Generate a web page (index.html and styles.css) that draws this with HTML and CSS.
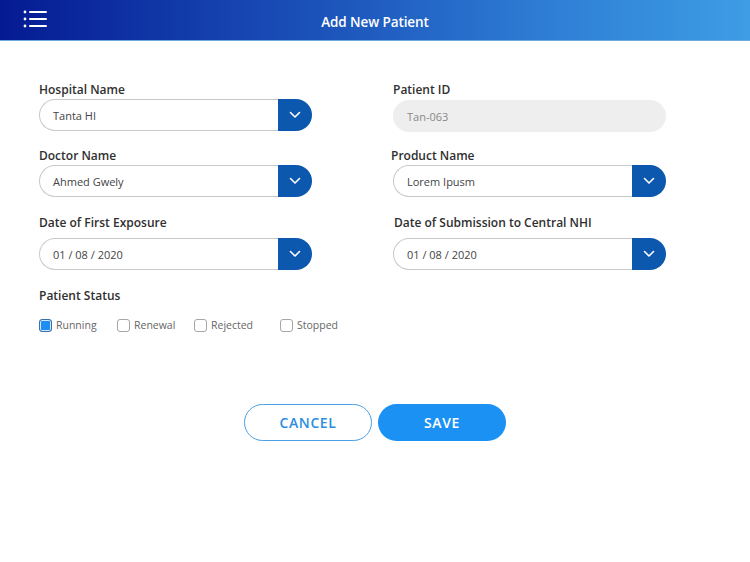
FILE: index.html
```html
<!DOCTYPE html>
<html>
<head>
<meta charset="utf-8">
<link rel="stylesheet" href="styles.css">
</head>
<body>
<header class="topbar">
  <div class="menu">
    <svg width="26" height="20" viewBox="0 0 26 20">
      <circle cx="2" cy="3" r="1.4" fill="#fff"/>
      <circle cx="2" cy="10" r="1.4" fill="#fff"/>
      <circle cx="2" cy="17" r="1.4" fill="#fff"/>
      <rect x="6" y="2" width="18" height="2" rx="1" fill="#fff"/>
      <rect x="6" y="9" width="18" height="2" rx="1" fill="#fff"/>
      <rect x="6" y="16" width="18" height="2" rx="1" fill="#fff"/>
    </svg>
  </div>
  <h1 class="title">Add New Patient</h1>
</header>

<main class="form">
  <div class="grid">
    <div class="group">
      <label class="label">Hospital Name</label>
      <div class="select"><span class="value">Tanta HI</span><span class="drop"><svg width="12" height="8" viewBox="0 0 12 8"><path d="M1.5 1.5 L6 6 L10.5 1.5" fill="none" stroke="#fff" stroke-width="1.6" stroke-linecap="round" stroke-linejoin="round"/></svg></span></div>
    </div>
    <div class="group">
      <label class="label">Patient ID</label>
      <div class="readonly">Tan-063</div>
    </div>

    <div class="group row2">
      <label class="label">Doctor Name</label>
      <div class="select"><span class="value">Ahmed Gwely</span><span class="drop"><svg width="12" height="8" viewBox="0 0 12 8"><path d="M1.5 1.5 L6 6 L10.5 1.5" fill="none" stroke="#fff" stroke-width="1.6" stroke-linecap="round" stroke-linejoin="round"/></svg></span></div>
    </div>
    <div class="group row2">
      <label class="label">Product Name</label>
      <div class="select"><span class="value">Lorem Ipusm</span><span class="drop"><svg width="12" height="8" viewBox="0 0 12 8"><path d="M1.5 1.5 L6 6 L10.5 1.5" fill="none" stroke="#fff" stroke-width="1.6" stroke-linecap="round" stroke-linejoin="round"/></svg></span></div>
    </div>

    <div class="group wide-gap">
      <label class="label">Date of First Exposure</label>
      <div class="select"><span class="value">01 / 08 / 2020</span><span class="drop"><svg width="12" height="8" viewBox="0 0 12 8"><path d="M1.5 1.5 L6 6 L10.5 1.5" fill="none" stroke="#fff" stroke-width="1.6" stroke-linecap="round" stroke-linejoin="round"/></svg></span></div>
    </div>
    <div class="group wide-gap">
      <label class="label">Date of Submission to Central NHI</label>
      <div class="select"><span class="value">01 / 08 / 2020</span><span class="drop"><svg width="12" height="8" viewBox="0 0 12 8"><path d="M1.5 1.5 L6 6 L10.5 1.5" fill="none" stroke="#fff" stroke-width="1.6" stroke-linecap="round" stroke-linejoin="round"/></svg></span></div>
    </div>
  </div>

  <div class="status">
    <div class="label">Patient Status</div>
    <div class="checks">
      <div class="check c1"><span class="box checked"></span>Running</div>
      <div class="check c2"><span class="box"></span>Renewal</div>
      <div class="check c3"><span class="box"></span>Rejected</div>
      <div class="check c4"><span class="box"></span>Stopped</div>
    </div>
  </div>

  <div class="actions">
    <button class="btn cancel">CANCEL</button>
    <button class="btn save">SAVE</button>
  </div>
</main>
</body>
</html>
```

FILE: styles.css
```css
* { box-sizing: border-box; }
html, body { margin: 0; padding: 0; background: #fff; }
body {
  font-family: "Open Sans", "Noto Sans", sans-serif;
  width: 750px;
  height: 562px;
  overflow: hidden;
  color: #333;
}

.topbar {
  height: 41px;
  background: linear-gradient(90deg, #051a92 0%, #1a4fb8 40%, #2f80d6 75%, #3e9de4 100%);
  border-bottom: 1px solid #6fa9dd;
  display: flex;
  align-items: center;
  justify-content: center;
  position: relative;
}
.menu {
  position: absolute;
  left: 23px;
  top: 9px;
  line-height: 0;
}
.title {
  margin: 0;
  color: #fff;
  font-size: 13.5px;
  font-weight: 600;
  letter-spacing: -0.1px;
  padding-top: 4px;
}

.form {
  padding: 0 0 0 39px;
}
.grid {
  display: grid;
  grid-template-columns: 273px 273px;
  column-gap: 81px;
  padding-top: 40px;
}
.group {
  display: flex;
  flex-direction: column;
  margin-bottom: 15px;
}
.group.row2 { margin-bottom: 17px; }
.label {
  font-size: 12px;
  font-weight: 600;
  color: #2f2f2f;
  line-height: 17px;
  margin-bottom: 1px;
}
.wide-gap .label { margin-bottom: 7px; }
.wide-gap { margin-bottom: 0; }

.select {
  height: 32px;
  display: flex;
}
.value {
  flex: 1;
  display: flex;
  align-items: center;
  border: 1px solid #c9c9c9;
  border-right: none;
  border-radius: 16px 0 0 16px;
  padding-left: 13px;
  font-size: 11px;
  color: #444;
}
.drop {
  width: 34px;
  height: 32px;
  background: #0c58ae;
  border-radius: 0 16px 16px 0;
  display: flex;
  align-items: center;
  justify-content: center;
  padding-right: 1px;
}
.readonly {
  height: 32px;
  background: #eeeeee;
  border-radius: 16px;
  display: flex;
  align-items: center;
  padding-left: 14px;
  font-size: 11px;
  color: #888;
}
.grid .group:nth-child(2) .label { margin-bottom: 2px; }
.grid .group:nth-child(4) .label { margin-left: -2px; }
.grid .group:nth-child(6) .label { margin-left: 1px; }

.status {
  margin-top: 17px;
}
.status .label { margin-bottom: 14px; }
.checks {
  display: flex;
  align-items: center;
}
.check {
  display: flex;
  align-items: center;
  font-size: 10.5px;
  color: #666;
}
.c1 { width: 78px; }
.c2 { width: 77px; }
.c3 { width: 86px; }
.box {
  width: 13px;
  height: 13px;
  border: 1px solid #a6a6a6;
  border-radius: 3px;
  margin-right: 4px;
  background: #fff;
}
.box.checked {
  background: #1d8ff2;
  border: 1px solid #3c6ea8;
  box-shadow: inset 0 0 0 1px #cfe6fb;
}

.actions {
  display: flex;
  justify-content: center;
  gap: 6px;
  margin-top: 72px;
  padding-right: 39px;
}
.btn {
  width: 128px;
  height: 37px;
  border-radius: 19px;
  font-family: "Open Sans", "Noto Sans", sans-serif;
  font-size: 14px;
  font-weight: 600;
  letter-spacing: 0.6px;
  cursor: pointer;
}
.cancel {
  background: #fff;
  border: 1px solid #4b9fe2;
  color: #2b8de0;
}
.save {
  background: #1a91f3;
  border: none;
  color: #fff;
}
```
